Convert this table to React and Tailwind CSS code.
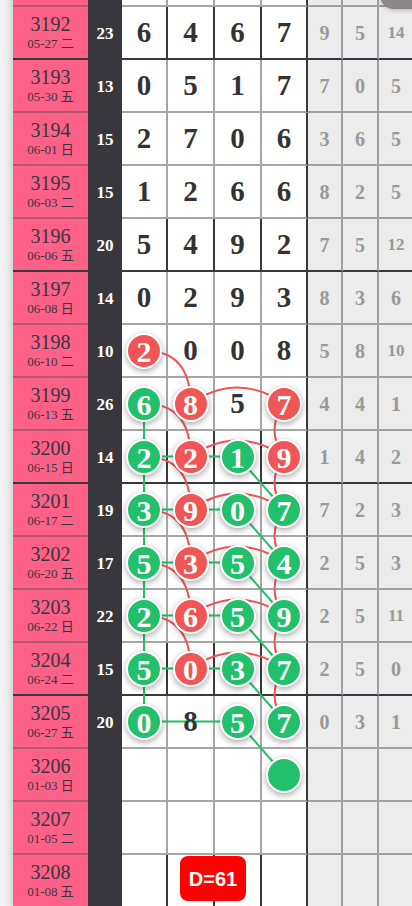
const ROWS = [
  { n: "3192", d: "05-27 二", s: "23", v: "6467", g: ["9", "5", "14"] },
  { n: "3193", d: "05-30 五", s: "13", v: "0517", g: ["7", "0", "5"] },
  { n: "3194", d: "06-01 日", s: "15", v: "2706", g: ["3", "6", "5"] },
  { n: "3195", d: "06-03 二", s: "15", v: "1266", g: ["8", "2", "5"] },
  { n: "3196", d: "06-06 五", s: "20", v: "5492", g: ["7", "5", "12"] },
  { n: "3197", d: "06-08 日", s: "14", v: "0293", g: ["8", "3", "6"] },
  { n: "3198", d: "06-10 二", s: "10", v: "2008", b: "r...", g: ["5", "8", "10"] },
  { n: "3199", d: "06-13 五", s: "26", v: "6857", b: "gr.r", g: ["4", "4", "1"] },
  { n: "3200", d: "06-15 日", s: "14", v: "2219", b: "grgr", g: ["1", "4", "2"] },
  { n: "3201", d: "06-17 二", s: "19", v: "3907", b: "grgg", g: ["7", "2", "3"] },
  { n: "3202", d: "06-20 五", s: "17", v: "5354", b: "grgg", g: ["2", "5", "3"] },
  { n: "3203", d: "06-22 日", s: "22", v: "2659", b: "grgg", g: ["2", "5", "11"] },
  { n: "3204", d: "06-24 二", s: "15", v: "5037", b: "grgg", g: ["2", "5", "0"] },
  { n: "3205", d: "06-27 五", s: "20", v: "0857", b: "g.gg", g: ["0", "3", "1"] },
  { n: "3206", d: "01-03 日", s: "", v: "    ", b: "...g", g: ["", "", ""] },
  { n: "3207", d: "01-05 二", s: "", v: "    ", g: ["", "", ""] },
  { n: "3208", d: "01-08 五", s: "", v: "    ", g: ["", "", ""] },
];

const DIGIT_W = ["w-[46px]", "w-[47px]", "w-[47px]", "w-[46px]"];
const GREY_W = ["w-[35px]", "w-[36px]", "w-[36px]"];

// centres of the digit cells, measured from the left edge of the digit area
const CX = [22, 68.5, 115.5, 162];
const cy = (k) => 53 * k + 25.5;

const RED = "#f05656";
const GREEN = "#22c06a";

function Ball({ color, children }) {
  return (
    <div
      className={`relative z-10 w-[36px] h-[36px] rounded-full border-2 border-white flex items-center justify-center text-white font-bold text-[30px] leading-none shadow-[0_2px_6px_rgba(0,0,0,0.35)] ${
        color === "r" ? "bg-[#f05656]" : "bg-[#22c06a]"
      }`}
    >
      <span className="pt-[2px]">{children}</span>
    </div>
  );
}

function Row({ row, dark }) {
  const line = dark ? "border-[#38383e]" : "border-[#a6a6a6]";
  return (
    <div className="flex h-[53px]">
      <div
        className={`w-[75px] shrink-0 bg-[#fd6188] border-b-2 ${
          dark ? "border-[#38383e]" : "border-[#b4566f]"
        } flex flex-col items-center justify-center text-[#3a3440]`}
      >
        <div className="text-[20px] leading-[22px]">{row.n}</div>
        <div className="text-[13px] leading-[17px]">{row.d}</div>
      </div>
      <div className="w-[34px] shrink-0 bg-[#38373d] flex items-center justify-center text-white font-bold text-[17px]">
        {row.s}
      </div>
      {DIGIT_W.map((w, i) => {
        const mark = row.b ? row.b[i] : ".";
        const val = row.v[i].trim();
        return (
          <div
            key={i}
            className={`${w} shrink-0 bg-white border-b-2 border-r-2 ${line} ${
              i === 3 ? "border-r-[#38383e]" : ""
            } flex items-center justify-center`}
          >
            {mark === "." ? (
              <span className="relative z-10 text-[29px] font-bold text-[#333] leading-none">{val}</span>
            ) : (
              <Ball color={mark}>{val}</Ball>
            )}
          </div>
        );
      })}
      {GREY_W.map((w, i) => {
        const t = row.g[i];
        return (
          <div
            key={i}
            className={`${w} shrink-0 bg-[#ececec] border-b-2 border-r-2 ${
              dark ? "border-b-[#38383e] border-r-[#a0a0a0]" : "border-[#a0a0a0]"
            } flex items-center justify-center font-bold text-[#999] ${
              t.length > 1 ? "text-[17px]" : "text-[20px]"
            }`}
          >
            {t}
          </div>
        );
      })}
    </div>
  );
}

function Lines() {
  const paths = [];
  // green: col 1 runs straight down
  paths.push({ d: `M${CX[0]} ${cy(7)} L${CX[0]} ${cy(13)}`, c: GREEN });
  // green: across the row, col 1 to col 3
  for (let k = 8; k <= 13; k++) {
    paths.push({ d: `M${CX[0]} ${cy(k)} L${CX[2]} ${cy(k)}`, c: GREEN });
  }
  // green: col 3 down to col 4 of the next row
  for (let k = 8; k <= 13; k++) {
    paths.push({ d: `M${CX[2]} ${cy(k)} L${CX[3]} ${cy(k + 1)}`, c: GREEN });
  }
  // red: col 1 bends into col 2 of the next row
  for (let k = 6; k <= 11; k++) {
    paths.push({ d: `M${CX[0]} ${cy(k)} Q${CX[1]} ${cy(k)} ${CX[1]} ${cy(k + 1)}`, c: RED });
  }
  // red: arc from col 2 over col 3 into col 4
  for (let k = 7; k <= 12; k++) {
    paths.push({ d: `M${CX[1]} ${cy(k)} Q${CX[2]} ${cy(k) - 32} ${CX[3]} ${cy(k)}`, c: RED });
  }
  // red: col 4 bows down row by row
  for (let k = 7; k <= 12; k++) {
    paths.push({ d: `M${CX[3]} ${cy(k)} Q${CX[3] - 19} ${cy(k) + 26.5} ${CX[3]} ${cy(k + 1)}`, c: RED });
  }
  return (
    <svg
      className="absolute left-[109px] top-0 z-[5] pointer-events-none"
      width="186"
      height={53 * 17}
      viewBox={`0 0 186 ${53 * 17}`}
    >
      {paths.map((p, i) => (
        <path key={i} d={p.d} fill="none" stroke={p.c} strokeWidth="2" />
      ))}
    </svg>
  );
}

export default function App() {
  const top = { n: "", d: "", s: "", v: "    ", g: ["", "", ""] };
  return (
    <div className="relative w-[412px] h-[906px] overflow-hidden bg-[#f4f4f4] font-['Liberation_Serif','Noto_Sans_CJK_SC',serif]">
      <div className="pl-[13px]">
        <div className="w-[430px] shadow-[-3px_0_7px_rgba(0,0,0,0.15)]">
          <div className="-mt-[46px]">
            <Row row={top} dark={false} />
          </div>
          <div className="relative">
            {ROWS.map((row) => {
              const n = Number(row.n);
              const dark = (n + 1 - 3193) % 4 === 0;
              return <Row key={row.n} row={row} dark={dark} />;
            })}
            <Lines />
          </div>
        </div>
      </div>

      {/* floating button peeking in at the top right */}
      <div className="absolute left-[380px] top-[-32px] w-[60px] h-[41px] rounded-[14px] bg-[#8b8787] shadow-[0_1px_4px_rgba(0,0,0,0.25)]" />

      {/* distance badge */}
      <div className="absolute left-[180px] top-[856px] w-[66px] h-[45px] rounded-[8px] bg-[#ff0000] flex items-center justify-center text-white font-bold text-[20px] font-['Liberation_Sans',Arial,sans-serif]">
        D=61
      </div>
    </div>
  );
}
